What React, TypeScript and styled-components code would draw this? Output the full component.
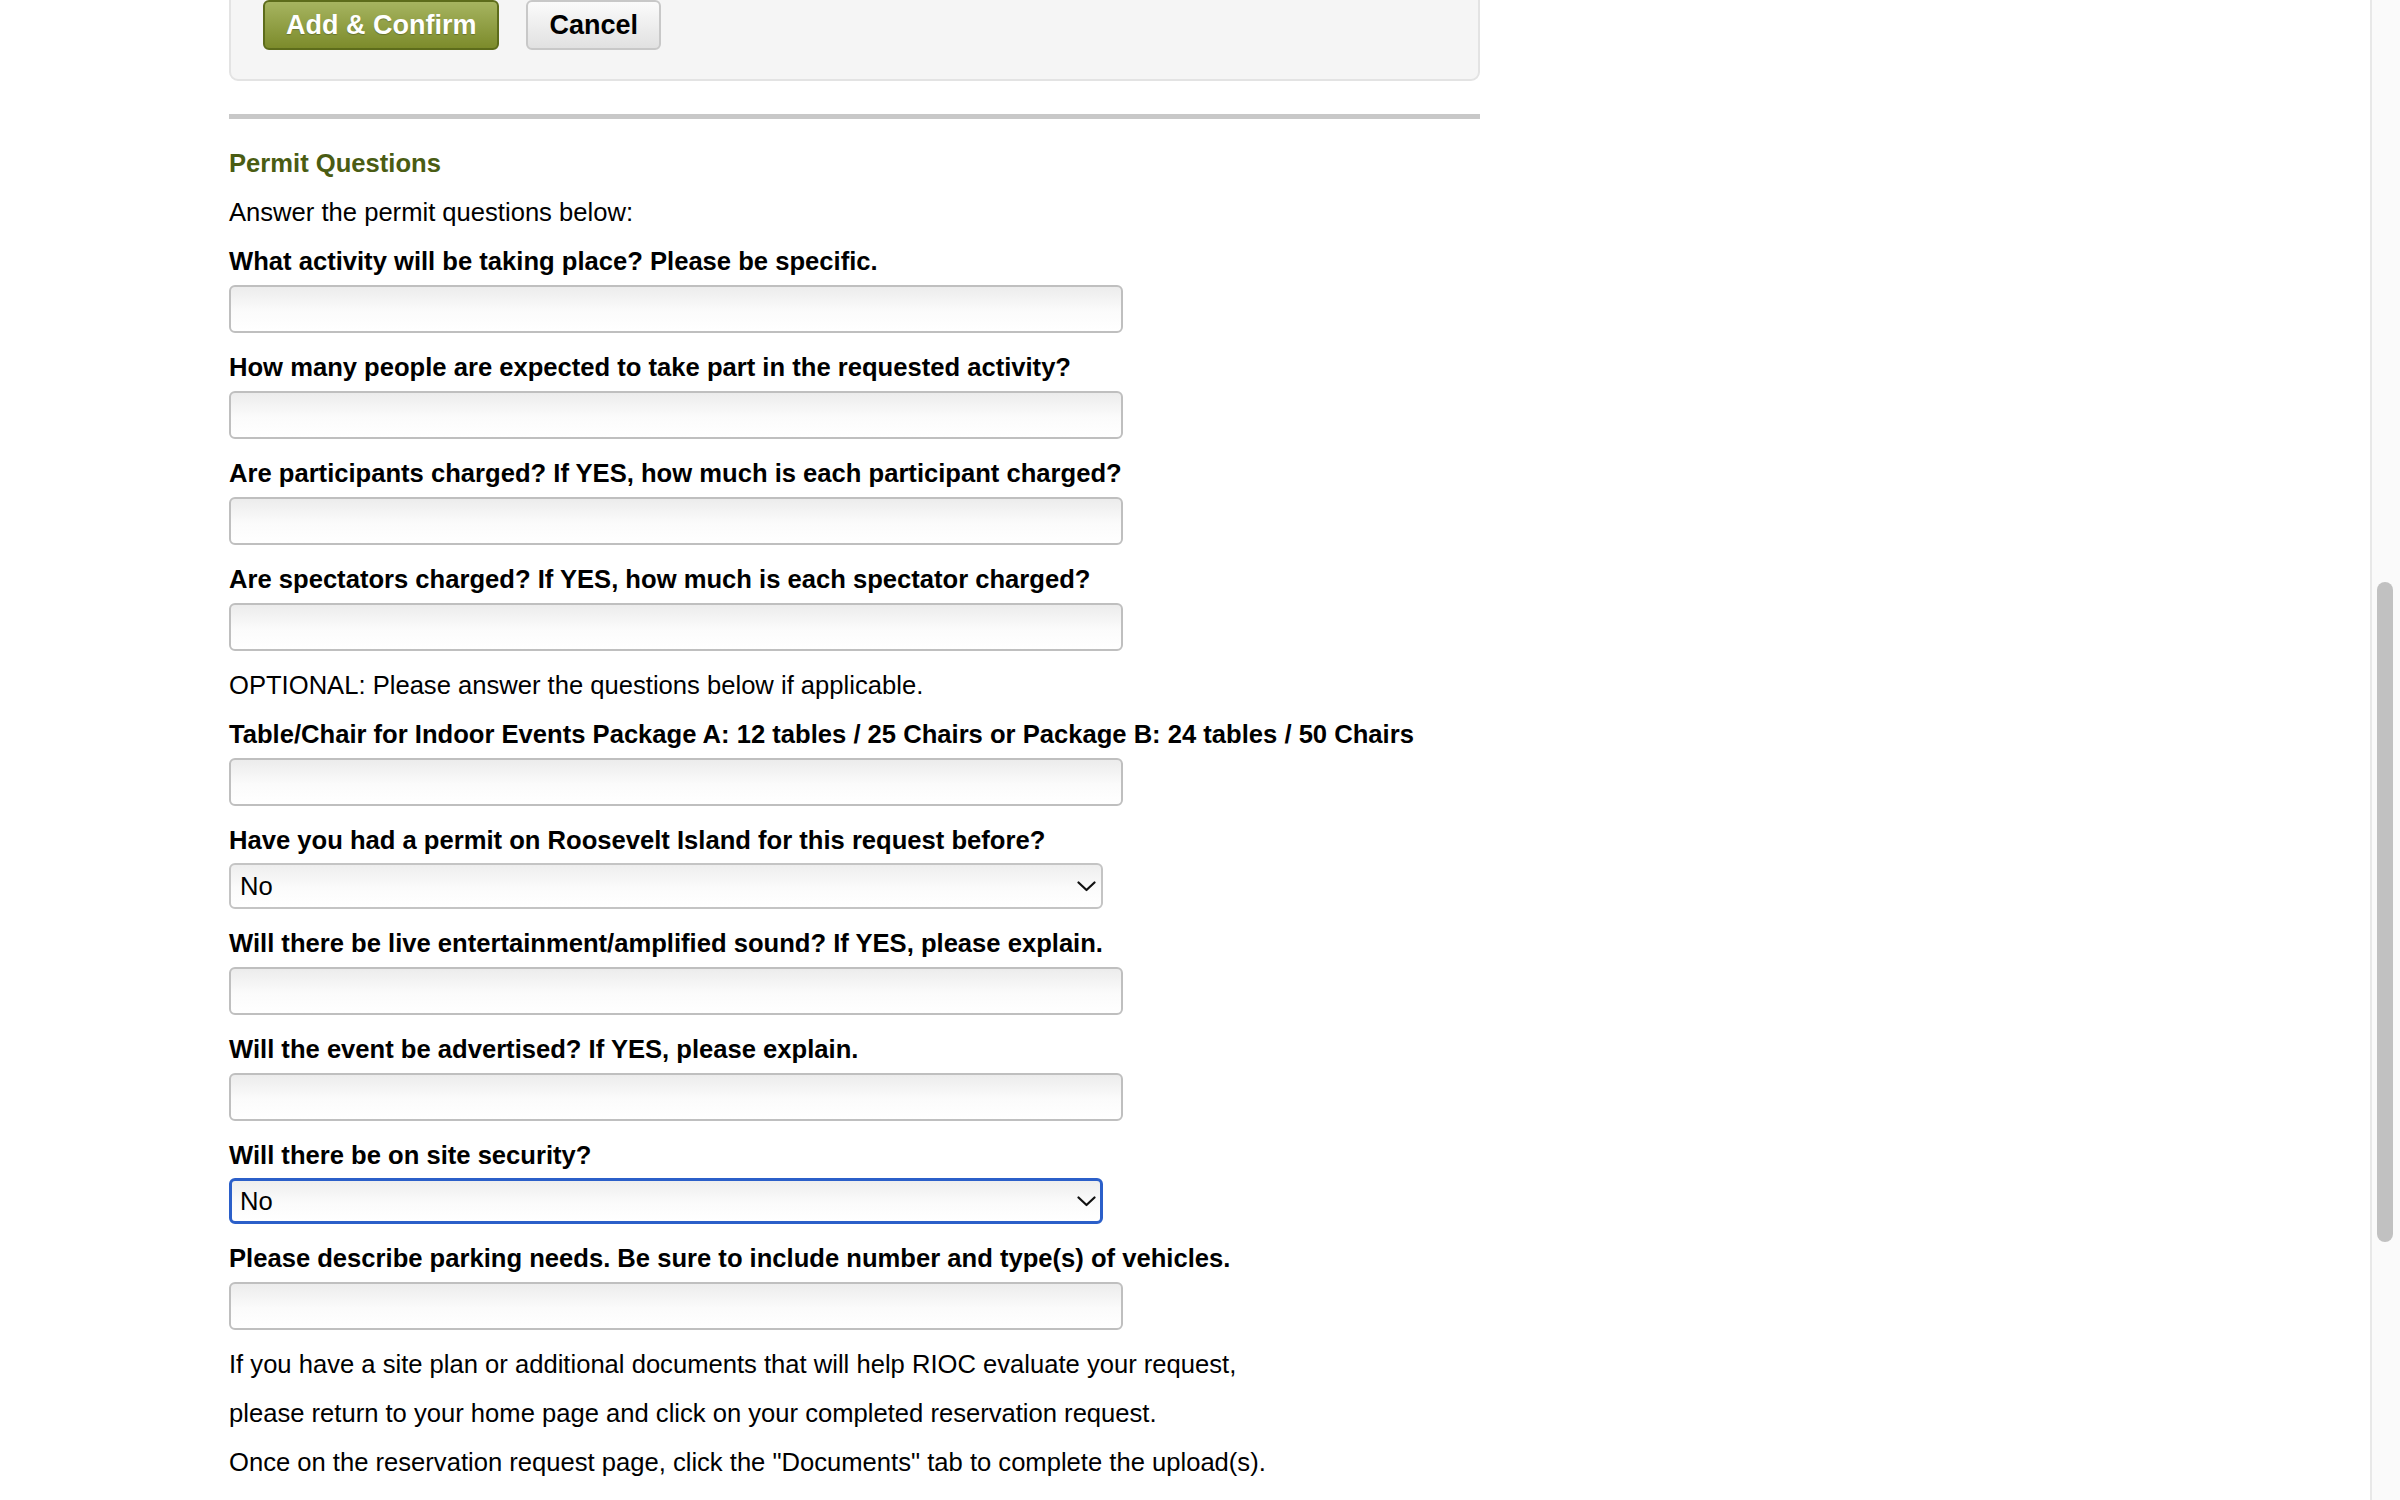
import React from "react";
import styled, { createGlobalStyle } from "styled-components";

const GlobalStyle = createGlobalStyle`
  html, body {
    margin: 0;
    padding: 0;
    overflow: hidden;
    background: #ffffff;
    font-family: "Liberation Sans", Arial, Helvetica, sans-serif;
    color: #000;
  }
  * { box-sizing: border-box; }
`;

const Page = styled.div`
  display: flex;
  width: 2400px;
  height: 1500px;
  overflow: hidden;
`;

const Main = styled.main`
  flex: 1;
  padding-left: 229px;
`;

const Column = styled.div`
  width: 1251px;
  display: flex;
  flex-direction: column;
`;

const ActionPanel = styled.div`
  margin-top: -32px;
  padding: 30px 30px 29px 32px;
  background: #f5f5f5;
  border: 2px solid #e3e3e3;
  border-radius: 0 0 9px 9px;
  display: flex;
  gap: 27px;
  align-items: flex-start;
`;

const Button = styled.button<{ $primary?: boolean }>`
  height: 50px;
  padding: 0 21px;
  font-family: "Liberation Sans", Arial, sans-serif;
  font-size: 27px;
  font-weight: bold;
  border-radius: 6px;
  cursor: pointer;
  color: ${(p) => (p.$primary ? "#ffffff" : "#000000")};
  border: 2px solid ${(p) => (p.$primary ? "#5d6c1b" : "#c8c8c8")};
  background: ${(p) =>
    p.$primary
      ? "linear-gradient(#a6b460, #7c8b2b)"
      : "linear-gradient(#fbfbfb, #e1e1e1)"};
  text-shadow: ${(p) => (p.$primary ? "0 1px 1px rgba(0,0,0,0.25)" : "none")};
`;

const Divider = styled.hr`
  margin: 33px 0 0;
  border: none;
  height: 5px;
  background: #c8c8c8;
`;

const Heading = styled.h3`
  margin: 29px 0 19px;
  font-size: 25.6px;
  line-height: 30px;
  font-weight: bold;
  color: #4a5c13;
`;

const Para = styled.p`
  margin: 0 0 19px;
  font-size: 25.6px;
  line-height: 30px;
  color: #000;
`;

const Label = styled.label<{ $tight?: boolean }>`
  display: block;
  margin-bottom: ${(p) => (p.$tight ? "8px" : "9px")};
  font-size: 25.6px;
  line-height: 30px;
  font-weight: bold;
  color: #000;
`;

const TextInput = styled.input`
  display: block;
  width: 894px;
  height: 48px;
  margin: 0 0 19px;
  padding: 0 10px;
  border: 2px solid #bfbfbf;
  border-radius: 6px;
  background: linear-gradient(#ececec, #fbfbfb 55%, #ffffff);
  font-family: "Liberation Sans", Arial, sans-serif;
  font-size: 25.6px;
  outline: none;
`;

const SelectWrap = styled.div`
  position: relative;
  width: 874px;
  margin-bottom: 19px;
`;

const Select = styled.select<{ $focused?: boolean }>`
  appearance: none;
  -webkit-appearance: none;
  display: block;
  width: 100%;
  height: 46px;
  padding: 0 40px 0 ${(p) => (p.$focused ? "8px" : "9px")};
  border: ${(p) => (p.$focused ? "3px solid #2b5fc9" : "2px solid #c4c4c4")};
  border-radius: 6px;
  background: linear-gradient(#eeeeee, #fbfbfb 55%, #ffffff);
  font-family: "Liberation Sans", Arial, sans-serif;
  font-size: 25.6px;
  color: #000;
  outline: none;
`;

const Chevron = styled.svg`
  position: absolute;
  right: 7px;
  top: 18px;
  width: 19px;
  height: 11px;
  pointer-events: none;
`;

const ScrollTrack = styled.div`
  width: 30px;
  height: 1500px;
  background: #fafafa;
  border-left: 2px solid #e8e8e8;
  display: flex;
  flex-direction: column;
  padding-left: 5px;
`;

const ScrollThumb = styled.div<{ $top: number; $height: number }>`
  margin-top: ${(p) => p.$top}px;
  width: 16px;
  height: ${(p) => p.$height}px;
  border-radius: 8px;
  background: #c1c1c1;
`;

type Field =
  | { kind: "text"; label: string }
  | { kind: "select"; label: string; focused?: boolean }
  | { kind: "para"; text: string };

const fields: Field[] = [
  { kind: "text", label: "What activity will be taking place? Please be specific." },
  { kind: "text", label: "How many people are expected to take part in the requested activity?" },
  { kind: "text", label: "Are participants charged? If YES, how much is each participant charged?" },
  { kind: "text", label: "Are spectators charged? If YES, how much is each spectator charged?" },
  { kind: "para", text: "OPTIONAL: Please answer the questions below if applicable." },
  {
    kind: "text",
    label:
      "Table/Chair for Indoor Events Package A: 12 tables / 25 Chairs or Package B: 24 tables / 50 Chairs",
  },
  { kind: "select", label: "Have you had a permit on Roosevelt Island for this request before?" },
  { kind: "text", label: "Will there be live entertainment/amplified sound? If YES, please explain." },
  { kind: "text", label: "Will the event be advertised? If YES, please explain." },
  { kind: "select", label: "Will there be on site security?", focused: true },
  { kind: "text", label: "Please describe parking needs. Be sure to include number and type(s) of vehicles." },
];

const ChevronIcon = () => (
  <Chevron viewBox="0 0 19 11">
    <path d="M1.5 1.5 L9.5 9 L17.5 1.5" fill="none" stroke="#111" strokeWidth="2.2" strokeLinecap="round" strokeLinejoin="round" />
  </Chevron>
);

export default function App() {
  return (
    <>
      <GlobalStyle />
      <Page>
        <Main>
          <Column>
            <ActionPanel>
              <Button $primary>Add &amp; Confirm</Button>
              <Button>Cancel</Button>
            </ActionPanel>
            <Divider />
            <Heading>Permit Questions</Heading>
            <Para>Answer the permit questions below:</Para>
            {fields.map((f, i) => {
              if (f.kind === "para") return <Para key={i}>{f.text}</Para>;
              if (f.kind === "select")
                return (
                  <React.Fragment key={i}>
                    <Label $tight>{f.label}</Label>
                    <SelectWrap>
                      <Select $focused={f.focused} defaultValue="No">
                        <option>No</option>
                        <option>Yes</option>
                      </Select>
                      <ChevronIcon />
                    </SelectWrap>
                  </React.Fragment>
                );
              return (
                <React.Fragment key={i}>
                  <Label>{f.label}</Label>
                  <TextInput type="text" />
                </React.Fragment>
              );
            })}
            <Para>If you have a site plan or additional documents that will help RIOC evaluate your request,</Para>
            <Para>please return to your home page and click on your completed reservation request.</Para>
            <Para>Once on the reservation request page, click the "Documents" tab to complete the upload(s).</Para>
          </Column>
        </Main>
        <ScrollTrack>
          <ScrollThumb $top={582} $height={660} />
        </ScrollTrack>
      </Page>
    </>
  );
}
